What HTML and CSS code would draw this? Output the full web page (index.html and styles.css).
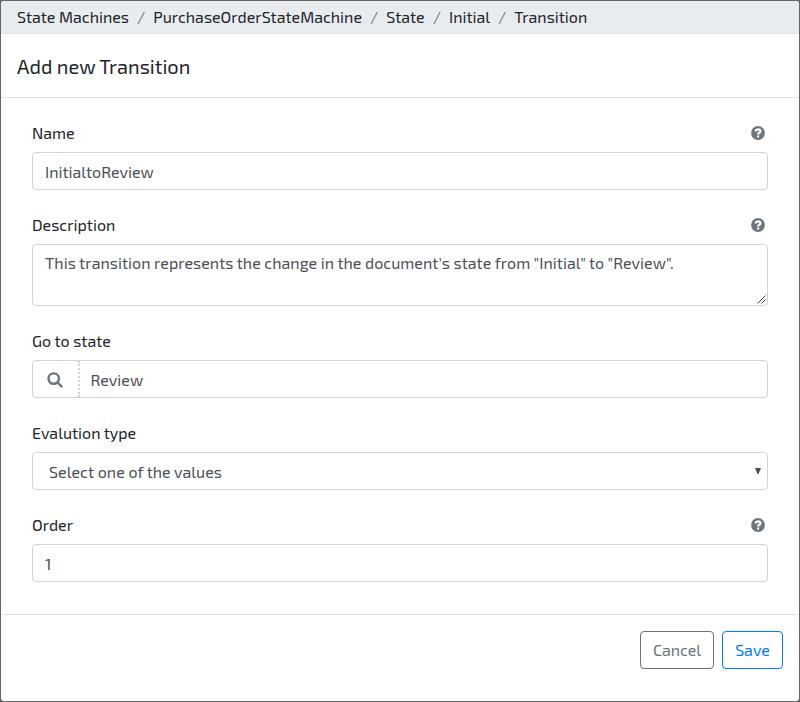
FILE: index.html
```html
<!DOCTYPE html>
<html lang="en">
<head>
<meta charset="utf-8">
<title>Add new Transition</title>
<link rel="stylesheet" href="styles.css">
</head>
<body>
<svg class="defs" aria-hidden="true">
  <symbol id="help" viewBox="0 0 14 14">
    <circle cx="7" cy="7" r="6.9" fill="#6c757d"/>
    <path d="M4.300 5.300C4.800 4 5.700 3.300 7 3.300c1.500 0 2.500.8 2.500 1.900C9.500 6.800 7.100 6.700 7.100 8.500" fill="none" stroke="#fff" stroke-width="2.200"/>
    <path d="M6 9.500h2.200v2.100H6z" fill="#fff"/>
  </symbol>
</svg>
<main class="dialog">
  <nav class="breadcrumb">
    <a>State Machines</a><i>/</i><a>PurchaseOrderStateMachine</a><i>/</i><a>State</a><i>/</i><a>Initial</a><i>/</i><a>Transition</a>
  </nav>
  <header class="header"><h1>Add new Transition</h1></header>
  <form class="body">
    <div class="group">
      <div class="label"><label for="name">Name</label><svg class="help"><use href="#help"/></svg></div>
      <input id="name" class="control" value="InitialtoReview">
    </div>
    <div class="group">
      <div class="label"><label for="desc">Description</label><svg class="help"><use href="#help"/></svg></div>
      <div class="control area"><span id="desc">This transition represents the change in the document's state from "Initial" to "Review".</span>
        <svg class="grip" viewBox="0 0 9 9"><path d="M.5 8.500l8-8M4.500 8.500l4-4" stroke="#444" stroke-width="1" fill="none"/></svg>
      </div>
    </div>
    <div class="group">
      <div class="label"><label for="state">Go to state</label></div>
      <div class="control lookup">
        <span class="search"><svg viewBox="0 0 16 16"><circle cx="6.700" cy="6.600" r="5.200"/><path d="M10.500 10.400l4.100 4.100"/></svg></span>
        <span class="value" id="state">Review</span>
      </div>
    </div>
    <div class="group">
      <div class="label"><label for="eval">Evalution type</label></div>
      <div class="control select"><span id="eval">Select one of the values</span><svg class="caret" viewBox="0 0 6 6"><path d="M0 0h6L3.500 6h-1z" fill="#495057"/></svg></div>
    </div>
    <div class="group">
      <div class="label"><label for="order">Order</label><svg class="help"><use href="#help"/></svg></div>
      <input id="order" class="control" value="1">
    </div>
  </form>
  <footer class="footer">
    <button class="btn cancel" type="button">Cancel</button>
    <button class="btn save" type="button">Save</button>
  </footer>
</main>
</body>
</html>
```
FILE: styles.css
```css
* { box-sizing: border-box; }
body {
  margin: 0;
  height: 702px;
  padding: 1px;
  background: #656466;
  color: #212529;
  font: 16px/24px "Exo 2", Roboto, sans-serif;
}
.defs { display: none; }
.dialog {
  height: 700px;
  background: #fff;
  border-radius: 3px;
  overflow: hidden;
}
.breadcrumb {
  display: flex;
  height: 33px;
  padding: 4px 16px 0;
  background: #e9ecef;
  border-bottom: 1px solid #dee2e6;
  white-space: nowrap;
}
.breadcrumb i { padding: 0 8px; font-style: normal; color: #6c757d; }
.header {
  height: 64px;
  padding: 17px 16px;
  border-bottom: 1px solid #dee2e6;
}
h1 { margin: 0; font-size: 20px; line-height: 30px; font-weight: 400; }
.body { height: 516px; padding: 23px 31px 0; }
.group { margin-bottom: 23px; }
.label {
  display: flex;
  align-items: center;
  justify-content: space-between;
  height: 24px;
  margin-bottom: 7px;
  padding-right: 3px;
}
.help { width: 14px; height: 14px; }
.control {
  display: flex;
  width: 100%;
  height: 38px;
  padding: 6px 12px;
  border: 1px solid #ced4da;
  border-radius: 4px;
  background: #fff;
  color: #495057;
  font: inherit;
}
.area { position: relative; height: 62px; white-space: nowrap; letter-spacing: .024px; }
.grip { position: absolute; right: 1px; bottom: 1px; width: 9px; height: 9px; }
.lookup { padding: 0; }
.search {
  display: flex;
  align-items: center;
  justify-content: center;
  width: 47px;
  margin-right: 10.500px;
  padding: 1px 1px 0 0;
  border-right: 2px dotted #ced4da;
}
.search svg { width: 16px; height: 16px; fill: none; stroke: #6c757d; stroke-width: 2.400; stroke-linecap: round; }
.value { padding-top: 7px; }
.select { justify-content: space-between; padding: 7px 6px 5px 16px; letter-spacing: .04px; }
.caret { width: 6px; height: 6px; margin-top: 8px; }
.footer {
  display: flex;
  justify-content: flex-end;
  gap: 8px;
  height: 87px;
  margin: 0 1px;
  padding: 16px 15px;
  border-top: 1px solid #dee2e6;
}
.btn {
  height: 38px;
  padding: 0;
  border: 1px solid;
  border-radius: 4px;
  background: #fff;
  font: inherit;
}
.cancel { width: 74px; color: #6c757d; }
.save { width: 61px; color: #007bff; }
```
